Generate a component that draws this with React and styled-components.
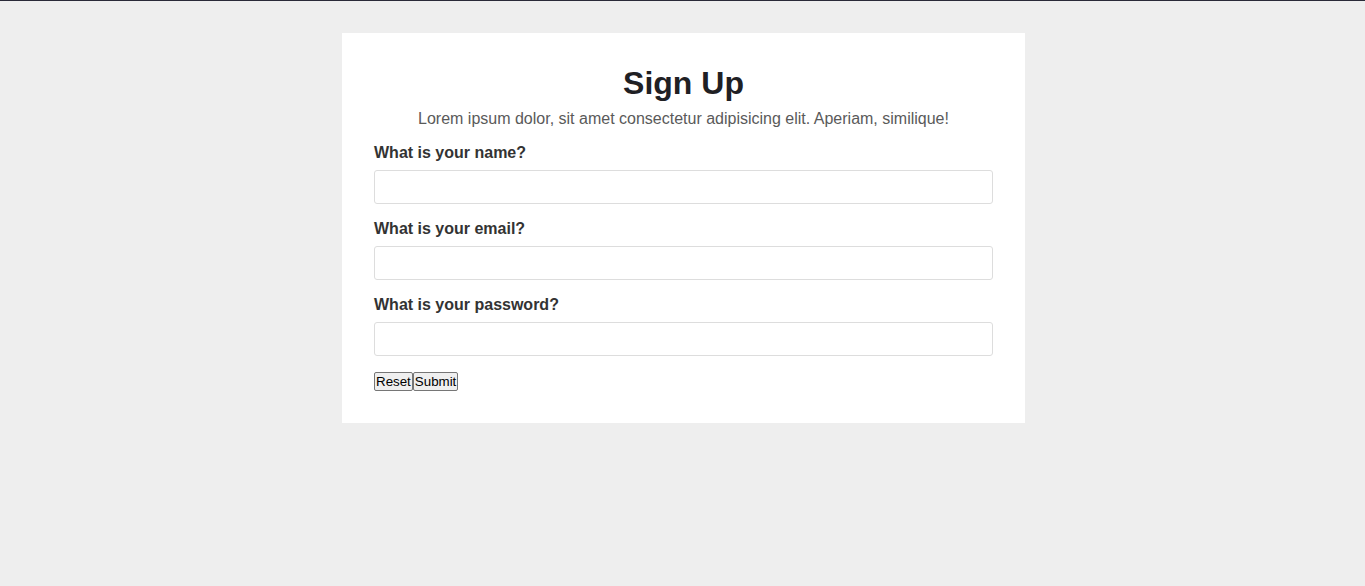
import React from 'react'
import styled, { createGlobalStyle } from 'styled-components'

const GlobalStyle = createGlobalStyle`
  html, body {
    margin: 0;
    padding: 0;
    background: #eeeeee;
  }
  body {
    border-top: 1px solid #2a2a38;
    font-family: "Liberation Sans", Arial, sans-serif;
    min-height: 585px;
  }
`

const Card = styled.form`
  width: 683px;
  box-sizing: border-box;
  margin: 32px 0 0 calc(50% - 340.5px);
  padding: 32px 32px 32px;
  background: #ffffff;
`

const Title = styled.h1`
  margin: 0;
  font-size: 32px;
  line-height: 37px;
  font-weight: 700;
  text-align: center;
  color: #1f2024;
`

const Lead = styled.p`
  margin: 8px 0 0;
  font-size: 16px;
  line-height: 18px;
  text-align: center;
  color: #5a5a5a;
`

const Field = styled.div`
  display: flex;
  flex-direction: column;
  margin-top: ${p => (p.first ? '16px' : '16px')};
`

const Label = styled.label`
  font-size: 16px;
  line-height: 18px;
  font-weight: 700;
  color: #333333;
  margin-bottom: 8px;
`

const Input = styled.input`
  box-sizing: border-box;
  width: 100%;
  height: 34px;
  border: 1px solid #dddddd;
  border-radius: 3px;
  padding: 0 8px;
  font-size: 16px;
  font-family: inherit;
  outline: none;
`

const Actions = styled.div`
  display: flex;
  margin-top: 16px;
`

const Button = styled.button`
  box-sizing: border-box;
  height: 19px;
  padding: 0 1px;
  font-family: "Liberation Sans", Arial, sans-serif;
  font-size: 13.33px;
  line-height: 15px;
  color: #000;
  background: #efefef;
  border: 1px solid #767676;
  border-radius: 2px;
`

export default function App() {
  return (
    <>
      <GlobalStyle />
      <Card onSubmit={e => e.preventDefault()}>
        <Title>Sign Up</Title>
        <Lead>Lorem ipsum dolor, sit amet consectetur adipisicing elit. Aperiam, similique!</Lead>
        <Field first>
          <Label htmlFor="name">What is your name?</Label>
          <Input id="name" type="text" />
        </Field>
        <Field>
          <Label htmlFor="email">What is your email?</Label>
          <Input id="email" type="email" />
        </Field>
        <Field>
          <Label htmlFor="password">What is your password?</Label>
          <Input id="password" type="password" />
        </Field>
        <Actions>
          <Button type="reset">Reset</Button>
          <Button type="submit">Submit</Button>
        </Actions>
      </Card>
    </>
  )
}
